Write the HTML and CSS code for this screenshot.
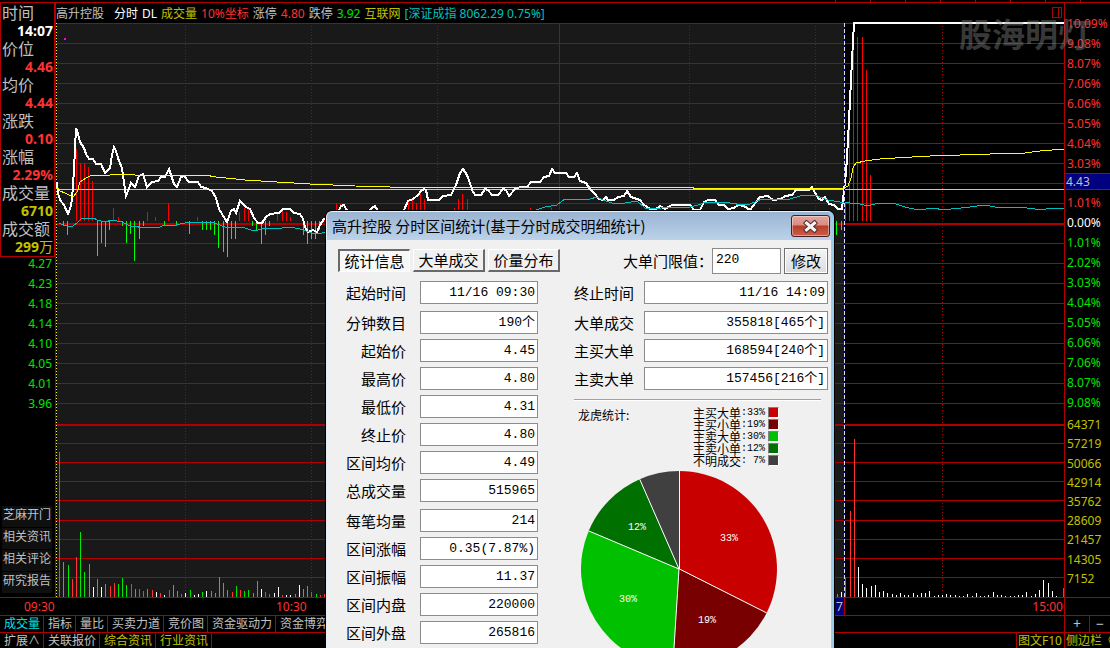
FILE: index.html
```html
<!DOCTYPE html>
<html lang="zh-CN">
<head>
<meta charset="utf-8">
<title>高升控股 分时</title>
<link rel="stylesheet" href="styles.css">
</head>
<body>
<div class="top-strip"><div class="ticks"></div></div>

<main class="workspace">
  <aside class="left-panel">
    <dl class="quote">
      <dt>时间</dt><dd class="white">14:07</dd>
      <dt>价位</dt><dd>4.46</dd>
      <dt>均价</dt><dd>4.44</dd>
      <dt>涨跌</dt><dd>0.10</dd>
      <dt>涨幅</dt><dd>2.29%</dd>
      <dt>成交量</dt><dd class="yellow">6710</dd>
      <dt>成交额</dt><dd class="yellow">299<span class="unit">万</span></dd>
    </dl>
    <ul class="prices">
      <li>4.27</li><li>4.23</li><li>4.18</li><li>4.14</li><li>4.10</li><li>4.05</li><li>4.01</li><li>3.96</li>
    </ul>
    <nav class="links">
      <a href="#">芝麻开门</a><a href="#">相关资讯</a><a href="#">相关评论</a><a href="#">研究报告</a>
    </nav>
  </aside>

  <section class="chart">
    <header class="chart-head">
      <span class="stock">高升控股</span>
      <span class="white">分时</span>
      <span class="white">DL</span>
      <span class="yellow">成交量</span>
      <span class="red">10%坐标</span>
      <span>涨停</span>
      <span class="red">4.80</span>
      <span>跌停</span>
      <span class="green">3.92</span>
      <span class="yellow">互联网</span>
      <span class="cyan">[深证成指 8062.29 0.75%]</span>
      <svg class="pane-icon" width="10" height="11" viewBox="0 0 10 11"><path d="M.5 .5H6.500V10.500H.5ZM6.500 .5H9.500V10.500H6.500Z"/></svg>
    </header>
    <svg class="plot" viewBox="56 23 1008 574" preserveAspectRatio="none">
      <rect class="range" x="57" y="23" width="787" height="574"/>
      <path class="grid" d="M56 23.500H1064M56 43.500H1064M56 63.500H1064M56 83.500H1064M56 103.500H1064M56 123.500H1064M56 143.500H1064M56 163.500H1064M56 183.500H1064M56 203.500H1064M56 243.500H1064M56 263.500H1064M56 283.500H1064M56 303.500H1064M56 323.500H1064M56 343.500H1064M56 363.500H1064M56 383.500H1064M56 403.500H1064M56 443.500H1064M56 462.500H1064M56 481.500H1064M56 500.500H1064M56 520.500H1064M56 539.500H1064M56 558.500H1064M56 577.500H1064M559.500 23V597"/>
      <path class="grid thick" d="M56 224H1064M56 425H1064"/>
      <path class="grid dots" d="M185.500 26V597M311.500 26V597M437.500 26V597M689.500 26V597M815.500 26V597M942.500 26V597"/>
      <path class="start" d="M56.500 23V597"/>
      <path class="bar up" d="M76.500 149V221M80.500 163V221M84.500 163V221M88.500 167V221M92.500 181V221M113.500 208V221M118.500 217V221M147.500 212V221M155.500 217V221M168.500 203V221M197.500 217V221M239.500 212V221M244.500 208V221M248.500 208V221M277.500 212V221M282.500 208V221M286.500 212V221M290.500 217V221M324.500 218V221M336.500 203V221M340.500 203V221M345.500 207V221M408.500 201V221M412.500 199V221M416.500 203V221M420.500 193V221M424.500 199V221M454.500 208V221M458.500 199V221M462.500 194V221M467.500 199V221M530.500 208V221M551.500 208V221M769.500 208V221M845.500 203V221M849.500 91V221M853.500 41V221M857.500 37V221M862.500 37V221M866.500 70V221M870.500 175V221"/>
      <path class="bar down" d="M63.500 221V226M67.500 221V235M97.500 221V256M101.500 221V243M105.500 221V247M109.500 221V230M122.500 221V226M126.500 221V243M130.500 221V234M134.500 221V261M139.500 221V239M143.500 221V226M164.500 221V226M176.500 221V226M189.500 221V234M202.500 221V230M206.500 221V230M210.500 221V230M214.500 221V235M218.500 221V248M223.500 221V252M227.500 221V257M231.500 221V239M235.500 221V239M252.500 221V226M256.500 221V230M261.500 221V244M265.500 221V235M269.500 221V226M303.500 221V235M307.500 221V244M311.500 221V239M315.500 221V239M319.500 221V230M836.500 221V235M841.500 221V230"/>
      <path class="base" d="M57 189.500H1064"/>
      <polyline class="price" points="57,182 58,193 60,200 64,205 68,214 70,209 72,200 74,170 76,128 78,134 80,142 84,148 86,154 89,159 93,159 96,164 101,164 105,173 110,168 112,155 114,147 116,151 119,161 122,168 124,183 126,196 131,183 135,187 139,176 143,174 147,187 152,182 158,181 161,177 165,177 169,169 171,175 174,184 177,187 181,177 184,176 189,182 198,182 201,187 206,188 212,191 216,198 219,209 225,219 227,222 231,211 234,209 236,213 240,201 246,207 250,209 254,218 258,223 262,223 266,217 270,214 279,213 283,209 290,209 294,213 300,214 303,219 305,227 308,232 313,230 317,232 320,225 324,219 330,222 338,212 341,206 344,205 346,209 350,212 368,212 372,208 375,206 378,211 390,217 404,210 408,201 413,199 418,195 421,191 424,189 426,190 428,200 439,200 443,196 451,195 456,185 460,173 463,169 467,175 470,183 472,190 475,195 481,195 485,189 488,190 492,195 498,195 503,189 506,190 509,196 515,189 520,187 527,187 531,182 540,182 544,177 549,176 552,169 555,173 566,173 569,177 574,177 577,173 580,181 586,183 590,189 594,193 599,199 603,200 606,197 608,200 614,200 618,197 624,196 627,191 631,197 640,200 644,205 649,208 653,211 656,209 660,206 665,209 672,205 690,205 694,210 700,210 704,202 708,200 715,200 719,205 724,205 728,209 734,208 738,205 744,206 750,210 756,202 760,197 768,196 773,200 781,199 785,196 792,195 796,190 809,190 812,187 815,193 819,199 822,200 825,197 829,204 834,205 838,209 842,209 844,190 846,173 848,140 850,100 852,60 854,23 1064,23"/>
      <polyline class="average" points="57,187 60,191 65,193 73,197 77,192 80,182 86,178 90,176 110,175 120,174 135,175 205,175 216,177 226,178 245,180 277,182 310,184 355,186 390,187 693,187 693,188 844,188 848,186 851,178 853,168 856,163 865,161 880,159 895,158 930,156 990,154 1025,153 1040,151 1064,149"/>
      <polyline class="index" points="59,223 63,225 67,226 73,226 78,222 82,218 94,218 97,220 105,222 112,220 122,222 130,226 147,228 160,227 164,225 173,226 180,224 190,222 212,222 225,227 235,228 242,227 254,231 265,228 275,229 290,227 300,229 315,234 330,232 536,210 545,207 557,205 565,199 580,200 590,199 597,197 603,200 615,204 625,203 637,201 645,208 655,209 667,207 690,207 698,205 706,202 730,203 743,205 750,204 762,199 790,199 800,196 815,195 828,200 840,202 860,204 868,206 878,203 896,204 905,207 918,210 935,208 942,210 970,207 985,205 1000,208 1020,207 1042,210 1050,208 1064,208"/>
      <path class="vol red-bar" d="M59.500 452V597M72.500 579V597M76.500 557V597M110.500 586V597M114.500 583V597M131.500 584V597M139.500 589V597M143.500 591V597M152.500 590V597M160.500 593V597M169.500 590V597M181.500 594V597M232.500 592V597M240.500 590V597M265.500 592V597M269.500 594V597M282.500 595V597M311.500 592V597M320.500 595V597M324.500 594V597M845.500 578V597M850.500 511V597M854.500 439V597M1063.500 588V597"/>
      <path class="vol green-bar" d="M63.500 562V597M68.500 565V597M80.500 532V597M84.500 572V597M89.500 564V597M97.500 579V597M105.500 584V597M118.500 584V597M122.500 578V597M126.500 585V597M135.500 589V597M147.500 589V597M173.500 585V597M177.500 591V597M190.500 590V597M202.500 592V597M211.500 591V597M215.500 593V597M219.500 577V597M223.500 583V597M227.500 590V597M236.500 586V597M244.500 591V597M248.500 590V597M253.500 593V597M257.500 581V597M295.500 594V597M303.500 589V597M307.500 586V597M316.500 594V597M837.500 594V597"/>
      <path class="vol white-bar" d="M93.500 587V597M101.500 587V597M156.500 592V597M164.500 595V597M185.500 593V597M194.500 595V597M198.500 594V597M206.500 591V597M261.500 589V597M274.500 593V597M278.500 587V597M286.500 595V597M290.500 595V597M299.500 585V597M841.500 592V597M858.500 567V597M862.500 584V597M866.500 588V597M871.500 586V597M875.500 585V597M879.500 592V597M883.500 591V597M887.500 593V597M892.500 594V597M896.500 595V597M900.500 593V597M904.500 595V597M908.500 595V597M913.500 593V597M917.500 595V597M921.500 593V597M925.500 593V597M929.500 591V597M934.500 596V597M938.500 595V597M942.500 595V597M946.500 594V597M950.500 595V597M955.500 595V597M959.500 596V597M963.500 596V597M967.500 594V597M972.500 596V597M976.500 593V597M980.500 596V597M984.500 596V597M988.500 595V597M993.500 592V597M997.500 595V597M1001.500 595V597M1005.500 596V597M1010.500 596V597M1014.500 596V597M1018.500 595V597M1022.500 595V597M1026.500 592V597M1031.500 596V597M1035.500 594V597M1039.500 590V597M1043.500 580V597M1048.500 583V597M1052.500 591V597M1056.500 596V597"/>
      <rect class="mark" x="64" y="38" width="2" height="2"/>
      <path class="cursor-back" d="M844.500 23V597"/>
      <path class="cursor" d="M844.500 23V597"/>
    </svg>
  </section>

  <aside class="right-axis">
    <ul class="percents">
      <li>10.09%</li><li>9.08%</li><li>8.07%</li><li>7.06%</li><li>6.06%</li><li>5.05%</li><li>4.04%</li><li>3.03%</li>
      <li class="current"><span>4.43</span></li>
      <li>1.01%</li><li class="white">0.00%</li>
      <li class="green">1.01%</li><li class="green">2.02%</li><li class="green">3.03%</li><li class="green">4.04%</li><li class="green">5.05%</li><li class="green">6.06%</li><li class="green">7.06%</li><li class="green">8.07%</li><li class="green">9.08%</li>
    </ul>
    <ul class="volumes">
      <li>64371</li><li>57219</li><li>50066</li><li>42914</li><li>35762</li><li>28609</li><li>21457</li><li>14305</li><li>7152</li>
    </ul>
  </aside>
</main>

<div class="row time-row">
  <div class="times"><span>09:30</span><span>10:30</span><span class="cursor-time">7</span><span class="end">15:00</span></div>
  <div class="side"></div>
</div>
<div class="row tab-row">
  <nav class="tabs">
    <button class="active">成交量</button><button>指标</button><button>量比</button><button>买卖力道</button><button>竞价图</button><button>资金驱动力</button><button>资金博弈</button>
  </nav>
  <div class="side zoomers"><button aria-label="放大">+</button><button aria-label="缩小">−</button></div>
</div>
<div class="row ext-row">
  <nav class="tabs">
    <button>扩展∧</button><button>关联报价</button><button class="yellow">综合资讯</button><button class="yellow">行业资讯</button>
    <button class="yellow f10">图文F10</button>
  </nav>
  <div class="side"><button class="yellow">侧边栏《</button></div>
</div>

<div class="watermark">股海明灯</div>

<section class="dialog" role="dialog" aria-labelledby="dialog-title">
  <header class="title-bar">
    <h1 id="dialog-title">高升控股 分时区间统计(基于分时成交明细统计)</h1>
    <button class="close" aria-label="关闭">
      <svg width="15" height="13" viewBox="0 0 15 13"><path d="M3.500 3L11.500 10M11.500 3L3.500 10" stroke="#4d3038" stroke-width="5" stroke-linecap="square"/><path d="M3.500 3L11.500 10M11.500 3L3.500 10" stroke="#f4f4f4" stroke-width="3" stroke-linecap="square"/></svg>
    </button>
  </header>
  <div class="dialog-body">
    <div class="toolbar">
      <button class="tab pressed">统计信息</button>
      <button class="tab">大单成交</button>
      <button class="tab">价量分布</button>
      <label class="limit-label" for="limit">大单门限值：</label>
      <input class="limit" id="limit" value="220">
      <button class="modify">修改</button>
    </div>
    <div class="columns">
      <form class="stats">
        <div class="group">
          <label for="a1">起始时间</label><input id="a1" readonly value="11/16 09:30">
        </div>
        <div class="group">
          <label for="a2">分钟数目</label><input id="a2" readonly value="190个">
          <label for="a3">起始价</label><input id="a3" readonly value="4.45">
          <label for="a4">最高价</label><input id="a4" readonly value="4.80">
          <label for="a5">最低价</label><input id="a5" readonly value="4.31">
          <label for="a6">终止价</label><input id="a6" readonly value="4.80">
          <label for="a7">区间均价</label><input id="a7" readonly value="4.49">
          <label for="a8">总成交量</label><input id="a8" readonly value="515965">
        </div>
        <div class="group">
          <label for="a9">每笔均量</label><input id="a9" readonly value="214">
          <label for="a10">区间涨幅</label><input id="a10" readonly value="0.35(7.87%)">
          <label for="a11">区间振幅</label><input id="a11" readonly value="11.37">
          <label for="a12">区间内盘</label><input id="a12" readonly value="220000">
          <label for="a13">区间外盘</label><input id="a13" readonly value="265816">
        </div>
      </form>
      <div class="right-col">
        <form class="stats wide">
          <div class="group">
            <label for="b1">终止时间</label><input id="b1" readonly value="11/16 14:09">
          </div>
          <div class="group">
            <label for="b2">大单成交</label><input id="b2" readonly value="355818[465个]">
            <label for="b3">主买大单</label><input id="b3" readonly value="168594[240个]">
            <label for="b4">主卖大单</label><input id="b4" readonly value="157456[216个]">
          </div>
        </form>
        <hr>
        <div class="legend-row">
          <span class="caption">龙虎统计:</span>
          <ul class="legend">
            <li>主买大单<span class="pct">:33%</span><i class="swatch big-buy"></i></li>
            <li>主买小单<span class="pct">:19%</span><i class="swatch small-buy"></i></li>
            <li>主卖大单<span class="pct">:30%</span><i class="swatch big-sell"></i></li>
            <li>主卖小单<span class="pct">:12%</span><i class="swatch small-sell"></i></li>
            <li>不明成交<span class="pct">: 7%</span><i class="swatch unknown"></i></li>
          </ul>
        </div>
        <svg class="pie" width="196" height="196" viewBox="0 0 196 196">
          <path fill="#c80000" d="M98 98V0A98 98 0 0 1 185.600 141.900Z"/>
          <path fill="#780000" d="M98 98L185.600 141.900A98 98 0 0 1 91.800 195.800Z"/>
          <path fill="#00c000" d="M98 98L91.800 195.800A98 98 0 0 1 7.700 59.900Z"/>
          <path fill="#007000" d="M98 98L7.700 59.900A98 98 0 0 1 58.700 8.200Z"/>
          <path fill="#404040" d="M98 98L58.700 8.200A98 98 0 0 1 98 0Z"/>
          <path class="cuts" d="M98.500 0V98L185.600 141.900M98 98L91.800 195.800M98 98L7.700 59.900M98 98L58.700 8.200"/>
          <g class="pie-text"><text x="148" y="70">33%</text><text x="126" y="152">19%</text><text x="47" y="131">30%</text><text x="56" y="59">12%</text></g>
        </svg>
      </div>
    </div>
  </div>
</section>
</body>
</html>
```
FILE: styles.css
```css
* { box-sizing: border-box; }

body {
  margin: 0;
  height: 100vh;
  display: flex;
  flex-direction: column;
  position: relative;
  overflow: hidden;
  background: #000;
  color: #c0c0c0;
  font: 12px/16px "Noto Sans", "Noto Sans CJK SC", sans-serif;
}

ul, dl, dd { margin: 0; padding: 0; list-style: none; }
button, input { font: inherit; color: inherit; margin: 0; }
a { color: inherit; text-decoration: none; }

.white { color: #fff; }
.red { color: #ff3232; }
.yellow { color: #c0c000; }
.green { color: #00e600; }
.cyan { color: #00c0c0; }

.top-strip { flex: none; height: 3px; border-bottom: 1px solid #b00000; }
.ticks {
  height: 2px;
  width: 275px;
  margin-left: auto;
  background: repeating-linear-gradient(to right, #b00000 0 1px, transparent 1px 35px);
}

.workspace { flex: 1; min-height: 0; display: flex; border-bottom: 1px solid #b00000; }

/* left panel */
.left-panel {
  flex: none;
  width: 56px;
  display: flex;
  flex-direction: column;
  border-right: 1px solid #b00000;
}
.quote {
  border: 1px solid #b00000;
  border-top: 0;
  line-height: 18px;
  padding-top: 1px;
}
.quote dt { font-size: 16px; padding-left: 1px; }
.quote dd { font-size: 14px; font-weight: 700; text-align: right; color: #ff3232; padding-right: 1px; }
.quote dd.white { color: #fff; }
.quote dd.yellow { color: #c0c000; }
.unit { font-weight: 400; }
.prices { margin-top: -3px; line-height: 20px; text-align: right; padding-right: 3px; color: #00e600; }
.links { margin-top: auto; display: flex; flex-direction: column; gap: 1px; padding: 0 3px 4px 2px; line-height: 17px; }
.links a { height: 21px; padding-left: 1px; background: #0f0f0f; white-space: nowrap; }

/* chart */
.chart { flex: 1; min-width: 0; display: flex; flex-direction: column; }
.chart-head { flex: none; height: 20px; line-height: 21px; display: flex; gap: 4px; white-space: nowrap; padding-right: 2px; }
.stock { margin-right: 6px; }
.pane-icon { margin: 4px 0 0 auto; fill: none; stroke: #b00000; shape-rendering: crispEdges; }
.plot { flex: 1; min-height: 0; width: 100%; display: block; overflow: visible; fill: none; shape-rendering: crispEdges; }
.range { fill: #191919; }
.grid { stroke: #b00000; }
.thick { stroke-width: 2; }
.dots { stroke-dasharray: 1 2; }
.start { stroke: #ff0; stroke-dasharray: 1 2; }
.up { stroke: #f00; }
.down { stroke: #0f0; }
.base { stroke: #c8c8c8; }
.price { stroke: #fff; stroke-width: 2; }
.average { stroke: #ff0; }
.index { stroke: #00c0c0; }
.red-bar { stroke: #ff3232; }
.green-bar { stroke: #00e600; }
.white-bar { stroke: #fff; }
.mark { fill: #f0f; }
.cursor-back { stroke: #000080; }
.cursor { stroke: #e0e0e0; stroke-dasharray: 4 2; }

/* right axis */
.right-axis, .side { flex: none; width: 46px; border-left: 1px solid #b00000; }
.right-axis { display: flex; flex-direction: column; padding: 10px 0 9px; gap: 2px; color: #ff3232; line-height: 18px; }
.percents { flex: 400 1 0; display: flex; flex-direction: column; }
.volumes { flex: 173 1 0; display: flex; flex-direction: column; color: #c0c000; }
.right-axis li { flex: 1 1 0; min-height: 0; display: flex; align-items: center; padding: 1px 0 0 2px; }
.right-axis .current { padding: 0; align-items: flex-start; }
.current span {
  flex: 1;
  padding-left: 1px;
  line-height: 15px;
  color: #c0c0c0;
  background: #000080;
  border: solid #b00000;
  border-width: 1px 0;
}

/* bottom rows */
.row { flex: none; display: flex; }
.time-row { height: 18px; border-bottom: 1px solid #b00000; color: #ff3232; }
.times { flex: 1; display: flex; padding-left: 24px; line-height: 17px; }
.times span { flex: 0 0 252px; }
.times .cursor-time {
  flex: none;
  margin-left: 307px;
  width: 10px;
  text-align: center;
  color: #c0c0c0;
  background: #000080;
  border-right: 1px solid #b00000;
}
.times .end { flex: none; margin-left: auto; padding-right: 1px; }
.tab-row { height: 17px; border-bottom: 1px solid #b00000; }
.ext-row { height: 15px; }
.tabs { flex: 1; display: flex; min-width: 0; }
.row button {
  flex: none;
  background: none;
  border: 0;
  border-right: 1px solid #b00000;
  padding: 0 3px 0 4px;
  line-height: 16px;
  white-space: nowrap;
}
.row .active { color: #00e0e0; }
.row .yellow { color: #c0c000; }
.row .f10 { margin-left: auto; border-right: 0; border-left: 1px solid #b00000; padding: 0 2px 0 1px; }
.side { overflow: hidden; }
.row .side button { padding: 0 0 0 1px; border: 0; }
.row .zoomers { display: flex; }
.row .zoomers button { flex: 1; padding: 0; font-size: 14px; }
.row .zoomers button:first-child { flex: none; width: 25px; border-right: 1px solid #b00000; }

.watermark {
  position: absolute;
  top: 12px;
  right: 19px;
  font-size: 33px;
  line-height: 46px;
  font-weight: 700;
  color: rgba(128, 128, 128, .45);
  pointer-events: none;
}

/* dialog */
.dialog {
  position: absolute;
  top: 211px;
  left: 326px;
  width: 508px;
  bottom: 0;
  overflow: hidden;
  border: 1px solid #e8eef6;
  border-right: 3px solid #9ecbe8;
  border-bottom: 0;
  border-radius: 6px 6px 0 0;
  box-shadow: 0 0 0 1px #000;
  background: #f0f0f0;
  color: #000;
  font-size: 15px;
}
.title-bar {
  height: 28px;
  display: flex;
  justify-content: space-between;
  align-items: center;
  padding: 0 1px 0 5px;
  background: linear-gradient(#99b4d1, #bcd2ea);
}
.title-bar h1 { margin: 0; font: 400 15px/28px "Noto Sans CJK SC", sans-serif; white-space: nowrap; }
.close {
  width: 39px;
  height: 22px;
  padding: 0;
  display: flex;
  align-items: center;
  justify-content: center;
  border: 1px solid #4b1c20;
  border-radius: 3px;
  background: linear-gradient(#e5a59d 0, #d98c80 45%, #b93c26 50%, #c9604a 100%);
  box-shadow: inset 0 0 0 1px rgba(255, 255, 255, .4);
}
.dialog-body { padding: 7px 3px 0 11px; font-family: "Noto Sans CJK SC", sans-serif; }
.dialog-body input { font-family: "Liberation Mono", "Noto Sans CJK SC", monospace; font-size: 13px; }
.toolbar { display: flex; align-items: center; gap: 3px; height: 27px; white-space: nowrap; }
.tab {
  width: 72px;
  height: 23px;
  padding: 0;
  line-height: 20px;
  background: #f0f0f0;
  border: solid;
  border-width: 1px 2px 2px 1px;
  border-color: #fff #696969 #696969 #fff;
}
.pressed { background: #f8f8f8; border-width: 2px 1px 1px 2px; border-color: #696969 #fff #fff #696969; }
.limit-label { margin: 0 -4px 0 auto; }
.limit { width: 69px; height: 26px; padding: 0 3px 2px; border: 1px solid #8c8c8c; background: #fff; }
.modify { width: 44px; height: 26px; padding: 0; border: 1px solid #707070; background: linear-gradient(#f4f4f4, #dcdcdc); box-shadow: inset 0 0 0 1px #fff; line-height: 22px; }
.columns { display: flex; justify-content: space-between; padding-top: 7px; }
.stats { display: flex; flex-direction: column; gap: 7px; }
.group { display: grid; grid-template-columns: 68px 118px; column-gap: 14px; row-gap: 5px; line-height: 23px; }
.group label { text-align: right; white-space: nowrap; }
.group input { width: 100%; height: 23px; padding: 0 2px; border: 1px solid #8c8c8c; background: #fff; text-align: right; }
.wide .group { grid-template-columns: 60px 184px; column-gap: 10px; }
.right-col hr { margin: 9px 7px 0 0; border: 0; border-top: 1px solid #a0a0a0; border-bottom: 1px solid #fff; }
.legend-row { display: flex; justify-content: space-between; margin: 6px 49px 4px 4px; font-size: 12px; line-height: 12px; }
.caption { line-height: 15px; }
.legend li { display: flex; height: 12px; }
.pct { font-family: "Liberation Mono", monospace; font-size: 10px; white-space: pre; }
.swatch { width: 11px; height: 11px; margin-left: 3px; border: 1px solid; border-color: #808080 #fff #fff #808080; }
.big-buy { background: #c80000; }
.small-buy { background: #780000; }
.big-sell { background: #00c000; }
.small-sell { background: #007000; }
.unknown { background: #404040; }
.pie { display: block; margin-left: 7px; }
.cuts { fill: none; stroke: #fff; }
.pie-text { fill: #fff; font-family: "Liberation Mono", monospace; font-size: 10px; text-anchor: middle; }
```
